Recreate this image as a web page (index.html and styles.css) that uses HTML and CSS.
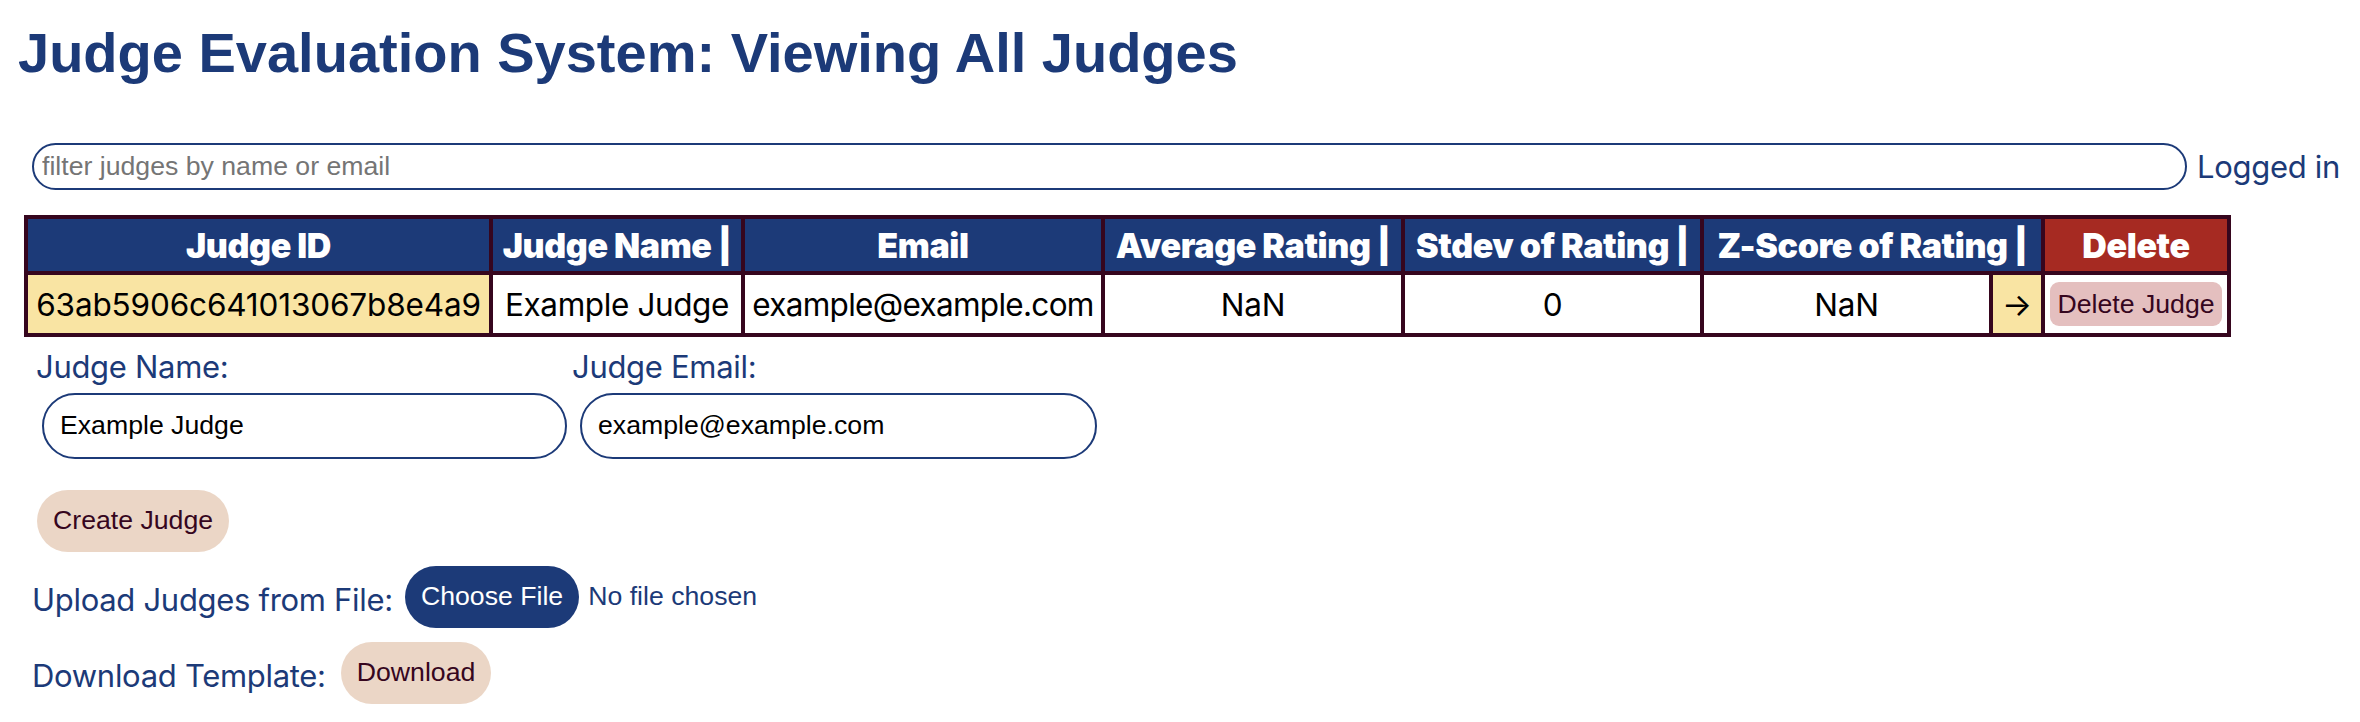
FILE: index.html
```html
<!DOCTYPE html>
<html lang="en">
<head>
<meta charset="utf-8">
<title>Judge Evaluation System</title>
<link rel="stylesheet" href="styles.css">
</head>
<body>
<main class="page">
  <h1 class="title">Judge Evaluation System: Viewing All Judges</h1>

  <div class="toolbar">
    <input class="filter" type="text" placeholder="filter judges by name or email">
    <span class="status">Logged in</span>
  </div>

  <table class="judges">
    <thead>
      <tr>
        <th>Judge ID</th>
        <th>Judge Name |</th>
        <th>Email</th>
        <th>Average Rating |</th>
        <th>Stdev of Rating |</th>
        <th colspan="2">Z-Score of Rating |</th>
        <th class="th-delete">Delete</th>
      </tr>
    </thead>
    <tbody>
      <tr>
        <td class="c-id">63ab5906c641013067b8e4a9</td>
        <td class="c-name">Example Judge</td>
        <td class="c-email">example@example.com</td>
        <td class="c-avg">NaN</td>
        <td class="c-std">0</td>
        <td class="c-z">NaN</td>
        <td class="c-arrow">→</td>
        <td class="c-del"><button class="del-btn" type="button">Delete Judge</button></td>
      </tr>
    </tbody>
  </table>

  <form class="create">
    <div class="fields">
      <label class="field field-name">
        <span class="field-label">Judge Name:</span>
        <input class="field-input" type="text" value="Example Judge">
      </label>
      <label class="field field-email">
        <span class="field-label">Judge Email:</span>
        <input class="field-input" type="text" value="example@example.com">
      </label>
    </div>
    <button class="btn btn-soft btn-create" type="button">Create Judge</button>
  </form>

  <div class="line">
    <span class="line-label line-upload">Upload Judges from File:</span>
    <button class="btn btn-blue" type="button">Choose File</button>
    <span class="file-status">No file chosen</span>
  </div>

  <div class="line">
    <span class="line-label line-download">Download Template:</span>
    <button class="btn btn-soft" type="button">Download</button>
  </div>
</main>
</body>
</html>
```

FILE: styles.css
```css
* {
  box-sizing: border-box;
}

html, body {
  margin: 0;
  padding: 0;
  background: #ffffff;
}

body {
  font-family: "Inter", "Liberation Sans", sans-serif;
  color: #1c3a78;
}

.page {
  width: 2360px;
  height: 722px;
  overflow: hidden;
}

.title {
  margin: 20px 0 0 18px;
  font-family: "Liberation Sans", Arial, sans-serif;
  font-weight: 700;
  font-size: 56px;
  line-height: normal;
  color: #1c3a78;
}

.toolbar {
  display: flex;
  align-items: center;
  margin-top: 58px;
  padding-left: 32px;
}

.filter {
  width: 2155px;
  height: 47px;
  padding: 0 8px;
  border: 2px solid #1c3a78;
  border-radius: 24px;
  font-family: "Liberation Sans", Arial, sans-serif;
  font-size: 26.67px;
  color: #000;
  outline: none;
  background: #fff;
}

.filter::placeholder {
  color: #757575;
}

.status {
  margin-left: 10px;
  font-size: 31px;
  letter-spacing: -0.3px;
  color: #1c3a78;
  white-space: nowrap;
}

.judges {
  margin: 25px 0 0 24px;
  border-collapse: separate;
  border-spacing: 0;
  border: 2px solid #36061e;
  font-family: "Inter", "Liberation Sans", sans-serif;
}

.judges th,
.judges td {
  border: 2px solid #36061e;
  white-space: nowrap;
  text-align: center;
}

.judges th {
  padding: 6px 2px 5px;
  background: #1c3a78;
  color: #ffffff;
  font-size: 34px;
  font-weight: 900;
  letter-spacing: -0.4px;
  line-height: normal;
}

.judges th.th-delete {
  background: #a62a22;
}

.judges td {
  padding: 7px 6px;
  font-size: 31.5px;
  letter-spacing: -0.15px;
  color: #000;
  background: #fff;
}

.judges td.c-id {
  width: 465px;
  background: #f9e4a3;
}

.judges td.c-name {
  width: 252px;
  letter-spacing: -0.4px;
}

.judges td.c-email {
  width: 360px;
  padding: 7px 4px;
  letter-spacing: -0.7px;
}

.judges td.c-avg { width: 300px; }
.judges td.c-std { width: 299px; }
.judges td.c-z { width: 289px; }

.judges td.c-arrow {
  width: 52px;
  padding: 7px 2px;
  background: #f9e4a3;
}

.judges td.c-del {
  width: 186px;
  padding: 7px 4px;
}

.del-btn {
  display: block;
  margin: 0 auto;
  height: 44px;
  padding: 0 7px;
  border: none;
  border-radius: 9px;
  background: #e4bfbf;
  color: #36061e;
  font-family: "Liberation Sans", Arial, sans-serif;
  font-size: 26.67px;
}

.create {
  margin: 0;
}

.fields {
  display: flex;
  margin-top: 11px;
  padding-left: 36px;
}

.field {
  display: flex;
  flex-direction: column;
}

.field-name {
  width: 536px;
}

.field-label {
  font-size: 31px;
  letter-spacing: -0.3px;
  line-height: 38.7px;
  color: #1c3a78;
}

.field-input {
  margin-top: 6px;
  margin-left: 6px;
  width: 525px;
  height: 66px;
  padding: 0 16px;
  border: 2px solid #1c3a78;
  border-radius: 33px;
  font-family: "Liberation Sans", Arial, sans-serif;
  font-size: 26.67px;
  color: #000;
  background: #fff;
  outline: none;
}

.field-email .field-input {
  margin-left: 8px;
  width: 517px;
}

.btn {
  height: 62px;
  padding: 0 16px;
  border: none;
  border-radius: 31px;
  font-family: "Liberation Sans", Arial, sans-serif;
  font-size: 26.67px;
  cursor: pointer;
}

.btn-soft {
  background: #ebd6c6;
  color: #36061e;
}

.btn-blue {
  background: #1c3a78;
  color: #ffffff;
}

.btn-create {
  display: block;
  margin: 31px 0 0 37px;
}

.line {
  display: flex;
  align-items: center;
  margin-top: 14px;
  padding-left: 32px;
}

.line-label {
  font-size: 31px;
  letter-spacing: -0.3px;
  color: #1c3a78;
  position: relative;
  top: 3px;
}

.line-upload {
  margin-right: 12px;
}

.line-download {
  margin-right: 15px;
}

.file-status {
  margin-left: 9px;
  font-family: "Liberation Sans", Arial, sans-serif;
  font-size: 26.67px;
  color: #1c3a78;
}
```
